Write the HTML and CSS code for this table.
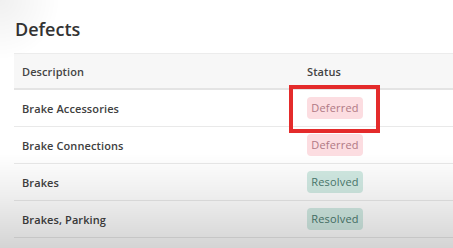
FILE: index.html
```html
<!DOCTYPE html>
<html>
<head>
    <meta charset="UTF-8">
    <title>Defects</title>
    <link rel="stylesheet" href="styles.css">
</head>
<body>
    <div class="panel">
        <h1>Defects</h1>

        <div class="defects">
            <div class="row head">
                <div class="cell">Description</div>
                <div class="cell">Status</div>
            </div>
            <div class="row">
                <div class="cell name">Brake Accessories</div>
                <div class="cell">
                    <span class="badge deferred">Deferred<span class="callout"></span></span>
                </div>
            </div>
            <div class="row">
                <div class="cell name">Brake Connections</div>
                <div class="cell"><span class="badge deferred">Deferred</span></div>
            </div>
            <div class="row">
                <div class="cell name">Brakes</div>
                <div class="cell"><span class="badge resolved">Resolved</span></div>
            </div>
            <div class="row">
                <div class="cell name">Brakes, Parking</div>
                <div class="cell"><span class="badge resolved">Resolved</span></div>
            </div>
        </div>
    </div>
</body>
</html>
```

FILE: styles.css
```css
html, body {
    height: 100%;
}
body {
    margin: 0;
    background: #ffffff;
    font-family: 'Open Sans', 'Noto Sans', sans-serif;
    color: #3a3a3a;
    overflow: hidden;
}
/* soft shading over the lower part of the page */
body::after {
    content: "";
    position: fixed;
    inset: 0;
    pointer-events: none;
    background:
        linear-gradient(to bottom, rgba(0,0,0,0) 62%, rgba(0,0,0,0.07) 80%, rgba(0,0,0,0.17) 100%),
        radial-gradient(circle at 0 0, rgba(0,0,0,0.06), rgba(0,0,0,0) 60px);
}
.panel {
    padding-left: 14px;
}
h1 {
    margin: 0 0 13px 1px;
    padding-top: 18px;
    font-size: 18px;
    line-height: 22px;
    font-weight: 600;
    color: #333;
}
.row {
    display: grid;
    grid-template-columns: 285px 1fr;
    align-items: center;
    height: 36px;
    border-bottom: 1px solid #e9e9e9;
}
.row.head {
    height: 34px;
    background: #f7f7f7;
    border-top: 1px solid #ececec;
    border-bottom: 2px solid #e4e4e4;
}
.cell {
    padding-left: 8px;
    font-size: 11px;
    font-weight: 600;
    color: #404040;
    letter-spacing: 0.1px;
}
.head .cell {
    color: #444;
}
.badge {
    position: relative;
    display: inline-block;
    width: 56px;
    height: 22px;
    line-height: 22px;
    text-align: center;
    border-radius: 4px;
    font-size: 11px;
    font-weight: 400;
    letter-spacing: 0.2px;
}
.badge.deferred {
    background: #fcdde1;
    color: #b07884;
}
.badge.resolved {
    background: #d2ebe4;
    color: #4b7a6e;
}
/* red highlight frame drawn around a badge */
.callout {
    position: absolute;
    left: -18px;
    top: -12px;
    width: 83px;
    height: 40px;
    border: 4px solid #e42b2b;
}
```
